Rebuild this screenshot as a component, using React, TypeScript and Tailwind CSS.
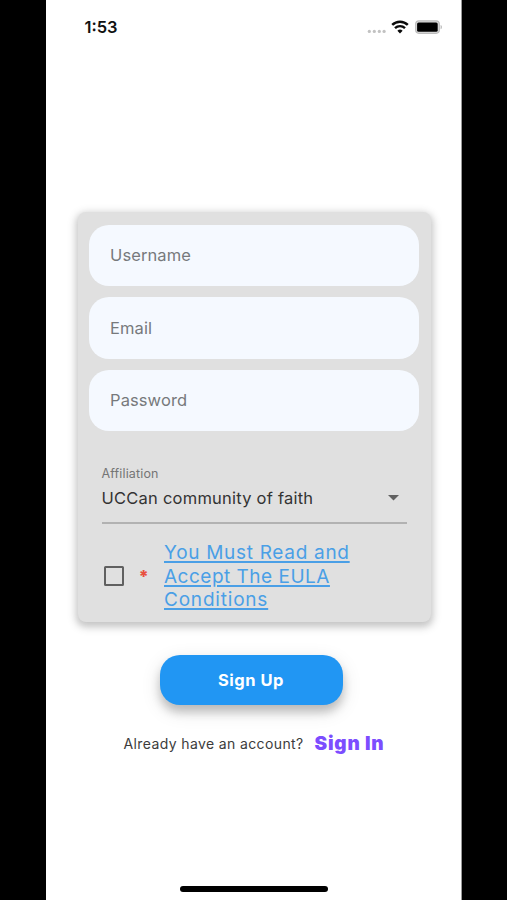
import React from 'react';

const FIELDS = [
  { id: 'username', label: 'Username' },
  { id: 'email', label: 'Email' },
  { id: 'password', label: 'Password' },
];

function StatusBar() {
  return (
    <div className="flex h-[54px] items-center justify-between pl-[39px] pr-[18px]">
      <span className="text-[16.5px] font-semibold leading-5 text-[#111]">1:53</span>
      <div className="flex h-[14px] items-center">
        {/* No signal */}
        <svg width="20" height="14" viewBox="0 0 20 14" fill="#c2c2c2">
          <circle cx="3.3" cy="11.4" r="1.6" />
          <circle cx="8.3" cy="11.4" r="1.6" />
          <circle cx="13.3" cy="11.4" r="1.6" />
          <circle cx="18.1" cy="11.4" r="1.6" />
        </svg>
        {/* Wifi */}
        <svg className="ml-[5px]" width="18" height="14" viewBox="0 0 18 14" fill="none" stroke="#0a0a0a">
          <path d="M1.2 4.9a11.2 11.2 0 0 1 15.6 0" strokeWidth="2.5" />
          <path d="M4 8.1a7.2 7.2 0 0 1 10 0" strokeWidth="2.4" />
          <path d="M9 13.4 6.4 10.8a3.7 3.7 0 0 1 5.2 0z" fill="#0a0a0a" stroke="none" />
        </svg>
        {/* Battery */}
        <svg className="ml-[6px]" width="28" height="14" viewBox="0 0 28 14">
          <rect x="0.7" y="0.9" width="23.6" height="12.4" rx="3.2" fill="#ddd" stroke="#bcbcbc" strokeWidth="1.2" />
          <rect x="2.1" y="2.4" width="20.6" height="9.4" rx="1.6" fill="#000" />
          <path d="M25.6 5c1.7.5 1.7 3.7 0 4.2z" fill="#b4b4b4" />
        </svg>
      </div>
    </div>
  );
}

function SignUpCard() {
  return (
    <div className="ml-[32px] mt-[158px] h-[410px] w-[353px] rounded-[8px] bg-[#e0e0e0] px-[11px] pt-[12.5px] shadow-[0_3px_6px_1px_rgba(0,0,0,0.1),0_3px_9px_3px_rgba(0,0,0,0.14)]">
      <div className="flex flex-col gap-[11px]">
        {FIELDS.map((f) => (
          <label
            key={f.id}
            className="flex h-[61.5px] w-[330px] items-center rounded-[20px] bg-[#f5f9ff] pl-[21.5px] pt-px text-[16.5px] tracking-[0.1px] text-[#77797c]"
          >
            {f.label}
          </label>
        ))}
      </div>

      {/* Affiliation select */}
      <div className="ml-[13px] mt-[35px] w-[305px] border-b-2 border-[#b2b2b2] pb-[14px]">
        <div className="text-[12.5px] leading-4 tracking-[0.15px] text-[#757575]">Affiliation</div>
        <div className="mt-[6px] flex h-[20px] items-center justify-between pr-[8px]">
          <span className="whitespace-nowrap text-[16.5px] leading-5 tracking-[0.23px] text-[#333]">
            UCCan community of faith
          </span>
          <svg width="11" height="6" viewBox="0 0 11 6" fill="#616161">
            <path d="M0 0h11L5.5 5.5z" />
          </svg>
        </div>
      </div>

      <div className="mt-[17px] flex items-center pl-[15px]">
        <div className="size-[20px] rounded-[1.5px] border-2 border-[#606060]" />
        <span className="ml-[15px] mt-px w-[8px] text-[17px] font-black leading-5 text-[#e8503f]">*</span>
        <a className="ml-[17.5px] block whitespace-nowrap text-[19px] leading-[23.5px] text-[#4a9fe6] underline decoration-[1.5px] underline-offset-2">
          <span className="tracking-[0.7px]">You Must Read and</span>
          <br />
          <span className="tracking-[0.5px]">Accept The EULA</span>
          <br />
          <span className="tracking-[0.8px]">Conditions</span>
        </a>
      </div>
    </div>
  );
}

export default function App() {
  return (
    <div className="flex h-[900px] w-[507px] justify-center bg-black font-['Inter',sans-serif]">
      <div className="flex h-[900px] w-[416px] flex-col border-r border-[#9a9a9a] bg-white">
        <StatusBar />
        <SignUpCard />
        <button className="ml-[114px] mt-[33px] h-[50px] w-[183px] rounded-[20px] bg-[#2196f3] text-[16.5px] font-bold tracking-[0.5px] text-white shadow-[0_7px_10px_rgba(0,0,0,0.2),0_6px_20px_rgba(0,0,0,0.12)]">
          Sign Up
        </button>
        <div className="ml-[78px] mt-[27px] flex h-6 items-center whitespace-nowrap">
          <span className="-mt-px text-[14px] tracking-[0.38px] text-[#3c3c3c]">Already have an account?</span>
          <a className="ml-[11px] mt-px text-[19px] font-black tracking-[0.75px] text-[#7c4dff]">Sign In</a>
        </div>
        <div className="mb-[8.5px] ml-[134px] mt-auto h-[5.5px] w-[148px] rounded-full bg-black" />
      </div>
    </div>
  );
}
